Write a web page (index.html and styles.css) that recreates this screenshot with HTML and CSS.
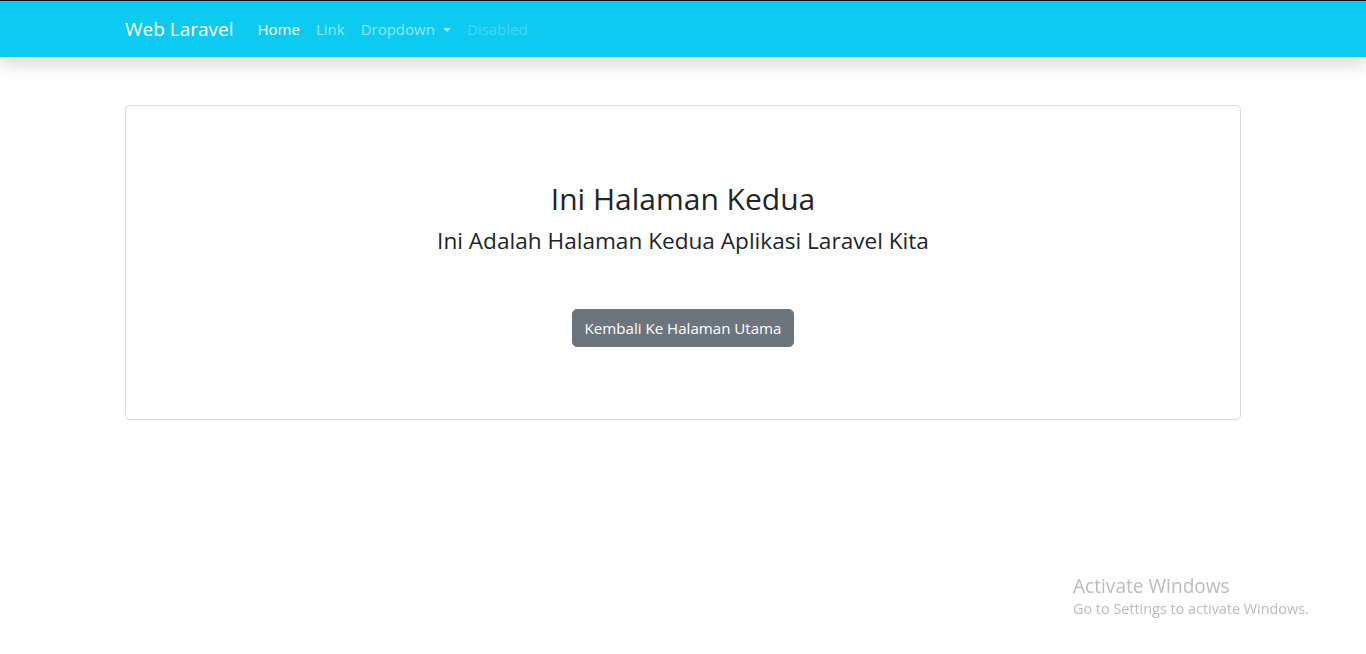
FILE: index.html
```html
<!DOCTYPE html>
<html lang="id">
<head>
<meta charset="utf-8">
<title>Web Laravel</title>
<link rel="stylesheet" href="styles.css">
</head>
<body>
<nav class="navbar">
  <div class="container nav-inner">
    <a class="brand" href="#">Web Laravel</a>
    <ul class="nav">
      <li><a class="nav-link active" href="#">Home</a></li>
      <li><a class="nav-link" href="#">Link</a></li>
      <li><a class="nav-link dropdown" href="#">Dropdown<span class="caret"></span></a></li>
      <li><a class="nav-link disabled" href="#">Disabled</a></li>
    </ul>
  </div>
</nav>
<main class="container main">
  <div class="card">
    <div class="card-body">
      <h1 class="title">Ini Halaman Kedua</h1>
      <h4 class="subtitle">Ini Adalah Halaman Kedua Aplikasi Laravel Kita</h4>
      <a class="btn" href="#">Kembali Ke Halaman Utama</a>
    </div>
  </div>
</main>
<div class="watermark">
  <div class="wm-title">Activate Windows</div>
  <div class="wm-sub">Go to Settings to activate Windows.</div>
</div>
</body>
</html>
```
FILE: styles.css
```css
* { box-sizing: border-box; }
html, body { margin: 0; padding: 0; }
body {
  font-family: "Open Sans", "Noto Sans", "Liberation Sans", sans-serif;
  font-size: 16px;
  line-height: 1.5;
  color: #212529;
  background: #fff;
}
.container {
  max-width: 1140px;
  margin: 0 auto;
  padding: 0 12px;
}
.navbar {
  border-top: 1px solid #111;
  background: #0dcaf0;
  height: 57px;
  padding: 8px 0;
  box-shadow: 0 8px 16px rgba(0, 0, 0, 0.15);
  position: relative;
  z-index: 1;
}
.nav-inner {
  display: flex;
  align-items: center;
}
.brand {
  font-size: 19px;
  line-height: 30px;
  padding: 5px 0;
  margin-right: 16px;
  color: #fff;
  text-decoration: none;
}
.nav {
  display: flex;
  list-style: none;
  margin: 0;
  padding: 0;
}
.nav-link {
  display: block;
  padding: 8px;
  font-size: 15px;
  line-height: 24px;
  color: rgba(255, 255, 255, 0.55);
  text-decoration: none;
}
.nav-link.active { color: #fff; }
.nav-link.disabled { color: rgba(255, 255, 255, 0.25); }
.caret {
  display: inline-block;
  margin-left: 8px;
  vertical-align: 3px;
  border-top: 4.5px solid rgba(255, 255, 255, 0.6);
  border-left: 4px solid transparent;
  border-right: 4px solid transparent;
}
.main { padding-top: 48px; }
.card {
  border: 1px solid rgba(0, 0, 0, 0.15);
  border-radius: 5px;
  background: #fff;
}
.card-body {
  padding: 73px 16px 72px;
  text-align: center;
}
.title {
  margin: 0;
  font-size: 30px;
  font-weight: 400;
  line-height: 40px;
}
.subtitle {
  margin: 8px 0 0;
  font-size: 22.6px;
  font-weight: 400;
  line-height: 28px;
}
.btn {
  display: inline-block;
  margin-top: 54px;
  padding: 6px 12px;
  font-size: 15.1px;
  line-height: 24px;
  color: #fff;
  background: #6c757d;
  border: 1px solid #6c757d;
  border-radius: 5px;
  text-decoration: none;
}
.watermark {
  position: fixed;
  left: 1073px;
  top: 573px;
  color: rgba(160, 160, 160, 0.7);
  font-family: "Open Sans", "Noto Sans", sans-serif;
}
.wm-title { font-size: 19.1px; line-height: 26px; }
.wm-sub { font-size: 14.4px; line-height: 20px; }
```
